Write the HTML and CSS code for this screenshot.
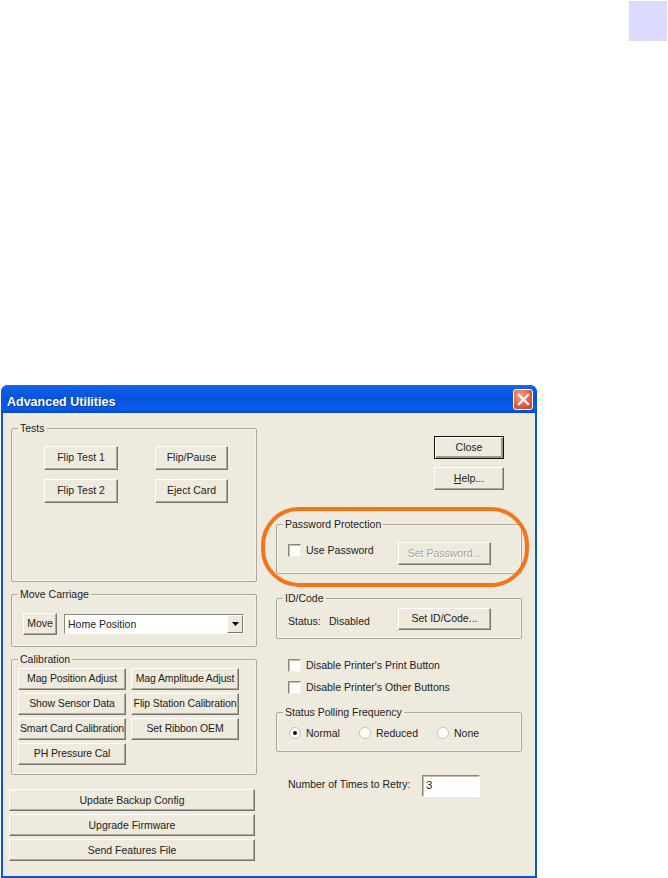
FILE: index.html
```html
<!DOCTYPE html>
<html lang="en">
<head>
<meta charset="utf-8">
<title>Advanced Utilities</title>
<link rel="stylesheet" href="styles.css">
</head>
<body>
<div class="page">
  <div class="top-strip"><div class="tab-mark"></div></div>
  <div class="dialog">
    <div class="titlebar">
      <span class="title">Advanced Utilities</span>
      <span class="close-x">
        <svg width="15" height="15" viewBox="0 0 15 15"><path d="M3 3 L12 12 M12 3 L3 12" stroke="#fff" stroke-width="2.4" stroke-linecap="square" fill="none"/></svg>
      </span>
    </div>
    <div class="body">
      <div class="col-left">
        <fieldset class="group group-tests">
          <legend>Tests</legend>
          <div class="tests-grid">
            <button class="btn">Flip Test 1</button>
            <button class="btn">Flip/Pause</button>
            <button class="btn">Flip Test 2</button>
            <button class="btn">Eject Card</button>
          </div>
        </fieldset>
        <fieldset class="group group-move">
          <legend>Move Carriage</legend>
          <div class="move-row">
            <button class="btn btn-move">Move</button>
            <div class="combo">
              <span class="combo-text">Home Position</span>
              <span class="combo-arrow"><svg width="7" height="4" viewBox="0 0 7 4"><path d="M0 0 H7 L3.5 4 Z" fill="#000"/></svg></span>
            </div>
          </div>
        </fieldset>
        <fieldset class="group group-cal">
          <legend>Calibration</legend>
          <div class="cal-grid">
            <button class="btn">Mag Position Adjust</button>
            <button class="btn">Mag Amplitude Adjust</button>
            <button class="btn">Show Sensor Data</button>
            <button class="btn">Flip Station Calibration</button>
            <button class="btn">Smart Card Calibration</button>
            <button class="btn">Set Ribbon OEM</button>
            <button class="btn">PH Pressure Cal</button>
          </div>
        </fieldset>
        <div class="wide-buttons">
          <button class="btn btn-wide">Update Backup Config</button>
          <button class="btn btn-wide">Upgrade Firmware</button>
          <button class="btn btn-wide">Send Features File</button>
        </div>
      </div>
      <div class="col-right">
        <div class="action-buttons">
          <button class="btn btn-action btn-default">Close</button>
          <button class="btn btn-action"><u>H</u>elp...</button>
        </div>
        <fieldset class="group group-pass">
          <legend>Password Protection</legend>
          <div class="pass-row">
            <label class="check"><span class="checkbox"></span>Use Password</label>
            <button class="btn btn-set btn-disabled">Set Password...</button>
          </div>
        </fieldset>
        <fieldset class="group group-id">
          <legend>ID/Code</legend>
          <div class="id-row">
            <span class="id-status">Status:</span>
            <span class="id-value">Disabled</span>
            <button class="btn btn-set btn-id">Set ID/Code...</button>
          </div>
        </fieldset>
        <div class="check-list">
          <label class="check"><span class="checkbox"></span>Disable Printer's Print Button</label>
          <label class="check"><span class="checkbox"></span>Disable Printer's Other Buttons</label>
        </div>
        <fieldset class="group group-poll">
          <legend>Status Polling Frequency</legend>
          <div class="radio-row">
            <label class="radio-item item-normal"><span class="radio radio-on"></span>Normal</label>
            <label class="radio-item item-reduced"><span class="radio"></span>Reduced</label>
            <label class="radio-item"><span class="radio"></span>None</label>
          </div>
        </fieldset>
        <div class="retry-row">
          <span class="retry-label">Number of Times to Retry:</span>
          <span class="textbox">3</span>
        </div>
      </div>
      <div class="highlight"></div>
    </div>
  </div>
</div>
</body>
</html>
```
FILE: styles.css
```css
* { box-sizing: border-box; }
html, body { margin: 0; padding: 0; background: #fff; }
body { font-family: "Liberation Sans", Arial, sans-serif; font-size: 10.5px; color: #222; overflow: hidden; }
.page { width: 668px; height: 878px; display: flex; flex-direction: column; }
.top-strip { display: flex; justify-content: flex-end; padding: 1px 1px 0 0; height: 41px; }
.tab-mark { width: 38px; height: 40px; background: #dbdbff; }
.dialog { margin: 344px 0 0 1px; width: 536px; height: 493px; display: flex; flex-direction: column; background: #0a55dc; border-radius: 7px 7px 0 0; padding: 0 2px 2px; }
.titlebar { margin: 0 -2px; height: 28px; flex: none; border-radius: 7px 7px 0 0; background: linear-gradient(#1b6cec 0, #0f5fe6 3px, #0553dc 50%, #0a5ce8 85%, #0648c4 100%); display: flex; align-items: center; justify-content: space-between; padding: 5px 4px 0 6px; }
.title { color: #fff; font-weight: bold; font-size: 12.5px; text-shadow: 1px 1px 0 #0a3a9c; }
.close-x { width: 20px; height: 21px; margin-top: -4px; border-radius: 3px; background: radial-gradient(circle at 35% 30%, #f0a088, #e0583a 60%, #c8401f); border: 1px solid #fff; display: flex; align-items: center; justify-content: center; }
.body { flex: 1; position: relative; display: flex; background: #efeade; padding-left: 6px; }
.col-left { width: 248px; padding-top: 9px; display: flex; flex-direction: column; }
.col-right { margin-left: 19px; width: 246px; display: flex; flex-direction: column; }

.group { margin: 0; padding: 0; min-width: 0; width: 246px; border: 1px solid #aaa99e; border-radius: 2px; box-shadow: 0 0 0 1px rgba(255,255,255,0.35) inset; }
.group legend { margin-left: 6px; padding: 0 2px; height: 12px; line-height: 12px; color: #222; }
.col-left .group { margin-left: 2px; }

.btn { font: inherit; color: #222; margin: 0; padding: 0 0 2px; white-space: nowrap; background: #efeade; border: 1px solid; border-color: #fff #77756a #77756a #fff; box-shadow: inset -1px -1px 0 #aca899; }
.btn-disabled { color: #a5a398; text-shadow: 1px 1px 0 #fff; }

.group-tests { height: 160px; padding-top: 12px; }
.tests-grid { margin-left: 32px; display: grid; grid-template-columns: 74px 73px; grid-auto-rows: 24px; column-gap: 37px; row-gap: 9px; }

.group-move { height: 59px; margin-top: 6px; padding-top: 13px; }
.move-row { margin-left: 11px; display: flex; align-items: center; gap: 7px; }
.btn-move { width: 34px; height: 22px; }
.combo { width: 180px; height: 20px; background: #fff; border: 1px solid; border-color: #8a887c #fff #fff #8a887c; display: flex; align-items: stretch; justify-content: space-between; }
.combo-text { padding-left: 3px; line-height: 18px; }
.combo-arrow { width: 16px; background: #efeade; border: 1px solid; border-color: #fff #77756a #77756a #fff; display: flex; align-items: center; justify-content: center; }

.group-cal { height: 122px; margin-top: 6px; padding-top: 3px; }
.cal-grid { margin-left: 6px; display: grid; grid-template-columns: 108px 108px; grid-auto-rows: 22px; column-gap: 5px; row-gap: 3px; letter-spacing: -0.12px; }
.cal-grid .btn { letter-spacing: inherit; }

.wide-buttons { margin-top: 14px; display: flex; flex-direction: column; gap: 3px; }
.btn-wide { width: 246px; height: 22px; padding-bottom: 0; }

.action-buttons { margin: 23px 0 0 158px; display: flex; flex-direction: column; gap: 8px; }
.btn-action { width: 70px; height: 23px; }
.btn-default { outline: 1px solid #111; outline-offset: -1px; border-color: #111; box-shadow: inset 1px 1px 0 #fff, inset -2px -2px 0 #99978a; }

.group-pass { height: 56px; margin-top: 28px; padding-top: 12px; }
.pass-row { margin: 0 30px 0 11px; display: flex; align-items: center; justify-content: space-between; }
.btn-set { width: 93px; height: 23px; }
.btn-id { height: 22px; }
.check { display: flex; align-items: center; gap: 5px; line-height: 11px; }
.checkbox { width: 13px; height: 13px; flex: none; background: #fff; border: 1px solid; border-color: #8a887c #f4f2ea #f4f2ea #8a887c; box-shadow: inset 1px 1px 0 #c0beb2; }
.pass-row .check { margin-top: -7px; }

.group-id { height: 47px; margin-top: 18px; padding-top: 4px; }
.id-row { margin: 0 30px 0 11px; display: flex; align-items: center; }
.id-status { width: 41px; margin-top: 3px; }
.id-value { width: 69px; margin-top: 3px; }

.check-list { margin: 20px 0 0 12px; display: flex; flex-direction: column; gap: 9px; }

.group-poll { height: 46px; margin-top: 12px; padding-top: 5px; }
.radio-row { margin-left: 12px; display: flex; height: 20px; align-items: center; }
.radio-item { display: flex; align-items: center; gap: 5px; }
.item-normal { width: 70px; }
.item-reduced { width: 78px; }
.radio { width: 12px; height: 12px; flex: none; border-radius: 50%; background: #fff; border: 1px solid #c4c2b6; display: flex; align-items: center; justify-content: center; }
.radio-on::after { content: ""; width: 4px; height: 4px; border-radius: 50%; background: #111; }

.retry-row { margin: 23px 0 0 12px; display: flex; align-items: flex-start; }
.retry-label { width: 134px; line-height: 19px; }
.textbox { width: 58px; height: 22px; padding-left: 3px; line-height: 18px; font-size: 11.5px; background: #fff; border: 1px solid; border-color: #8a887c #fff #fff #8a887c; box-shadow: inset 1px 1px 0 #c0beb2; }

.highlight { position: absolute; left: 258px; top: 94px; width: 268px; height: 80px; border: 4px solid #f4741a; border-radius: 38px; pointer-events: none; }
```
